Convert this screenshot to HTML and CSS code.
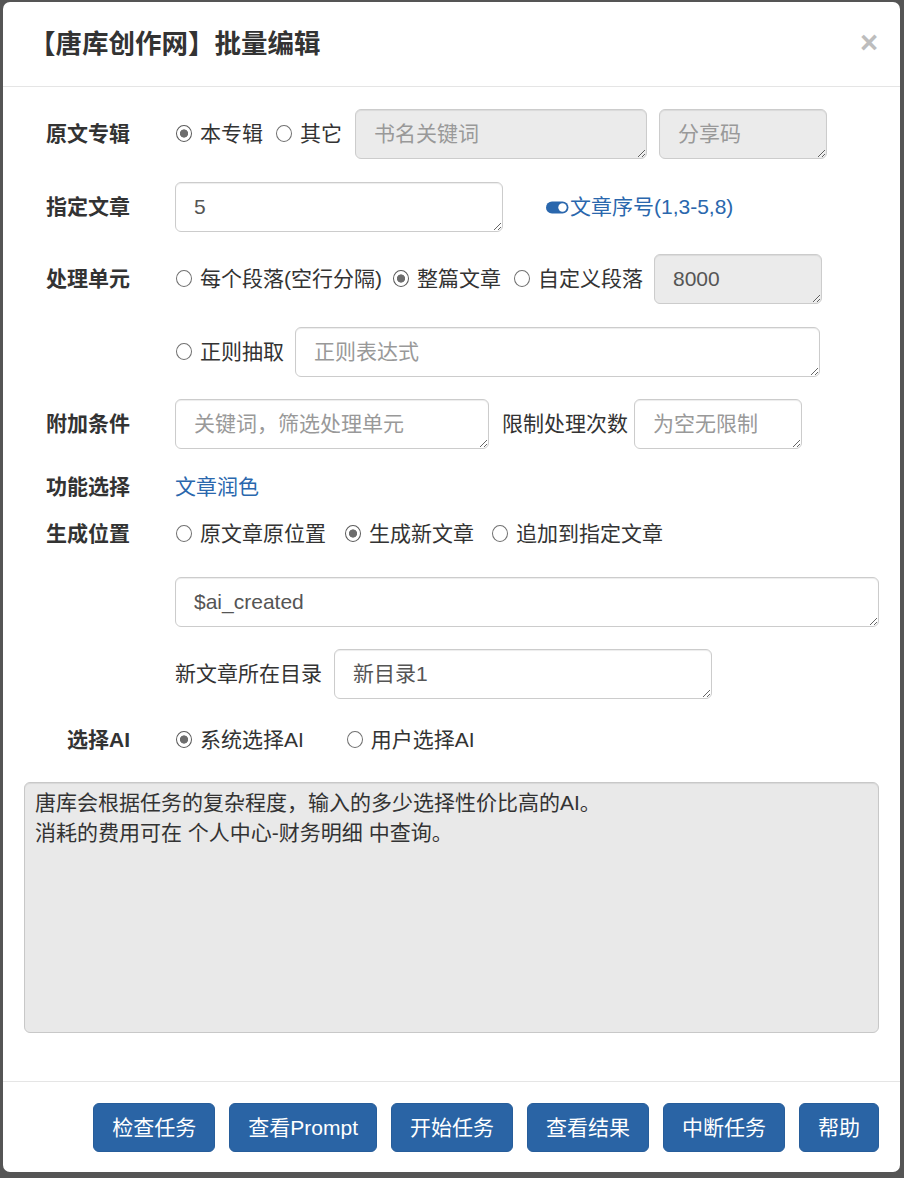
FILE: index.html
```html
<!DOCTYPE html>
<html lang="zh-CN">
<head>
<meta charset="utf-8">
<title>批量编辑</title>
<link rel="stylesheet" href="styles.css">
</head>
<body>
<div class="modal">
  <div class="modal-header">
    <h4 class="modal-title">【唐库创作网】批量编辑</h4>
    <span class="close">×</span>
  </div>
  <div class="modal-body">
    <div class="row r1">
      <label class="lbl">原文专辑</label>
      <div class="ctrl">
        <span class="opt"><span class="radio checked"></span><span>本专辑</span></span>
        <span class="opt g12"><span class="radio"></span><span>其它</span></span>
        <textarea class="fc ro w292 g13" readonly placeholder="书名关键词"></textarea>
        <textarea class="fc ro w168 g12" readonly placeholder="分享码"></textarea>
      </div>
    </div>
    <div class="row r2">
      <label class="lbl">指定文章</label>
      <div class="ctrl">
        <textarea class="fc w328">5</textarea>
        <a class="link toggle-link">
          <svg class="toggle" width="23" height="13" viewBox="0 0 23 13"><rect x="0" y="0.5" width="22.5" height="12" rx="6" fill="#2a67ad"/><circle cx="16.5" cy="6.5" r="4.2" fill="#fff"/></svg>文章序号(1,3-5,8)</a>
      </div>
    </div>
    <div class="row r3">
      <label class="lbl">处理单元</label>
      <div class="ctrl">
        <span class="opt"><span class="radio"></span><span>每个段落(空行分隔)</span></span>
        <span class="opt g10"><span class="radio checked"></span><span>整篇文章</span></span>
        <span class="opt g12"><span class="radio"></span><span>自定义段落</span></span>
        <textarea class="fc ro w168 g11" readonly>8000</textarea>
      </div>
    </div>
    <div class="row r3b">
      <span class="lbl"></span>
      <div class="ctrl">
        <span class="opt"><span class="radio"></span><span>正则抽取</span></span>
        <textarea class="fc w525 g11" placeholder="正则表达式"></textarea>
      </div>
    </div>
    <div class="row r4">
      <label class="lbl">附加条件</label>
      <div class="ctrl">
        <textarea class="fc w314" placeholder="关键词，筛选处理单元"></textarea>
        <span class="g13">限制处理次数</span>
        <textarea class="fc w168 g6" placeholder="为空无限制"></textarea>
      </div>
    </div>
    <div class="row r5">
      <label class="lbl">功能选择</label>
      <div class="ctrl"><a class="link">文章润色</a></div>
    </div>
    <div class="row r6">
      <label class="lbl">生成位置</label>
      <div class="ctrl">
        <span class="opt"><span class="radio"></span><span>原文章原位置</span></span>
        <span class="opt g18"><span class="radio checked"></span><span>生成新文章</span></span>
        <span class="opt g17"><span class="radio"></span><span>追加到指定文章</span></span>
      </div>
    </div>
    <div class="row r7">
      <span class="lbl"></span>
      <div class="ctrl">
        <textarea class="fc grow">$ai_created</textarea>
      </div>
    </div>
    <div class="row r8">
      <span class="lbl"></span>
      <div class="ctrl">
        <span>新文章所在目录</span>
        <textarea class="fc w378 g12">新目录1</textarea>
      </div>
    </div>
    <div class="row r9">
      <label class="lbl">选择AI</label>
      <div class="ctrl">
        <span class="opt"><span class="radio checked"></span><span>系统选择AI</span></span>
        <span class="opt g42"><span class="radio"></span><span>用户选择AI</span></span>
      </div>
    </div>
    <div class="info">唐库会根据任务的复杂程度，输入的多少选择性价比高的AI。<br>消耗的费用可在 个人中心-财务明细 中查询。</div>
  </div>
  <div class="modal-footer">
    <button class="btn">检查任务</button>
    <button class="btn">查看Prompt</button>
    <button class="btn">开始任务</button>
    <button class="btn">查看结果</button>
    <button class="btn">中断任务</button>
    <button class="btn">帮助</button>
  </div>
</div>
</body>
</html>
```

FILE: styles.css
```css
html, body {
  margin: 0;
  padding: 0;
}
body {
  background: #555;
  font-family: "Liberation Sans", "Noto Sans CJK SC", sans-serif;
  font-size: 21px;
  line-height: 30px;
  color: #333;
  height: 1178px;
  overflow: hidden;
}
.modal {
  margin: 2px 0 0 3px;
  width: 897px;
  height: 1170px;
  background: #fff;
  border-radius: 7px;
  display: flex;
  flex-direction: column;
  overflow: hidden;
}
.modal-header {
  box-sizing: border-box;
  height: 85px;
  flex: none;
  border-bottom: 1px solid #e5e5e5;
  display: flex;
  align-items: center;
  justify-content: space-between;
  padding: 0 21px;
}
.modal-title {
  margin: 0 0 0 5px;
  font-size: 26.5px;
  font-weight: bold;
  line-height: 36px;
  color: #333;
}
.close {
  font-size: 31px;
  font-weight: bold;
  color: #bdbdbd;
  line-height: 1;
  margin-right: 1px;
  margin-top: -4px;
}
.modal-body {
  flex: 1;
  padding: 22px 21px 0;
}
.row {
  display: flex;
  align-items: center;
}
.lbl {
  width: 106px;
  flex: none;
  text-align: right;
  font-weight: bold;
  margin-right: 45px;
  white-space: nowrap;
}
.ctrl {
  display: flex;
  align-items: center;
  flex: 1;
  white-space: nowrap;
}
.r1 { margin-bottom: 23px; }
.r2 { margin-bottom: 22px; }
.r3 { margin-bottom: 23px; }
.r3b { margin-bottom: 22px; }
.r4 { margin-bottom: 23px; }
.r5 { margin-bottom: 17px; }
.r6 { margin-bottom: 28px; }
.r7 { margin-bottom: 22px; }
.r8 { margin-bottom: 26px; }
.r9 { margin-bottom: 27px; }

.opt {
  display: inline-flex;
  align-items: center;
}
.radio {
  width: 16px;
  height: 17px;
  box-sizing: border-box;
  border: 1px solid #707070;
  border-radius: 50%;
  background: #fff;
  margin: -2px 8px 0 1px;
  flex: none;
}
.radio.checked {
  border: 1.5px solid #5a5a5a;
  background: radial-gradient(circle, #6d6d6d 0 3.8px, #fff 4.4px);
}
.g6 { margin-left: 6px; }
.g10 { margin-left: 10px; }
.g11 { margin-left: 11px; }
.g12 { margin-left: 12px; }
.g13 { margin-left: 13px; }
.g17 { margin-left: 17px; }
.g18 { margin-left: 18px; }
.g42 { margin-left: 42px; }

.fc {
  box-sizing: border-box;
  height: 50px;
  padding: 9px 18px;
  font-family: "Liberation Sans", "Noto Sans CJK SC", sans-serif;
  font-size: 21px;
  line-height: 30px;
  color: #555;
  background: #fff;
  border: 1px solid #ccc;
  border-radius: 6px;
  box-shadow: inset 0 1px 1px rgba(0, 0, 0, 0.075);
  overflow: hidden;
  outline: none;
  flex: none;
}
.fc::placeholder {
  color: #999;
}
.fc.ro {
  background: #ebebeb;
}
.w168 { width: 168px; }
.w292 { width: 292px; }
.w314 { width: 314px; }
.w328 { width: 328px; }
.w378 { width: 378px; }
.w525 { width: 525px; }
.grow { flex: 1; width: auto; min-width: 0; }

.link {
  color: #2a67ad;
  text-decoration: none;
}
.toggle-link {
  margin-left: 43px;
  display: inline-flex;
  align-items: center;
}
.toggle {
  display: block;
  margin-right: 1px;
  margin-top: 1px;
}

.info {
  box-sizing: border-box;
  height: 251px;
  background: #e9e9e9;
  border: 1px solid #c8c8c8;
  border-radius: 6px;
  padding: 5px 10px;
  color: #333;
  box-shadow: inset 0 1px 1px rgba(0, 0, 0, 0.075);
}

.modal-footer {
  flex: none;
  border-top: 1px solid #e5e5e5;
  padding: 21px 21px 20px;
  display: flex;
  justify-content: flex-end;
  gap: 14px;
}
.btn {
  height: 49px;
  box-sizing: border-box;
  padding: 0 18px;
  border: 1px solid #275d9a;
  background: #2a64a5;
  color: #fff;
  font-family: "Liberation Sans", "Noto Sans CJK SC", sans-serif;
  font-size: 21px;
  line-height: 47px;
  border-radius: 6px;
  cursor: pointer;
}
```
